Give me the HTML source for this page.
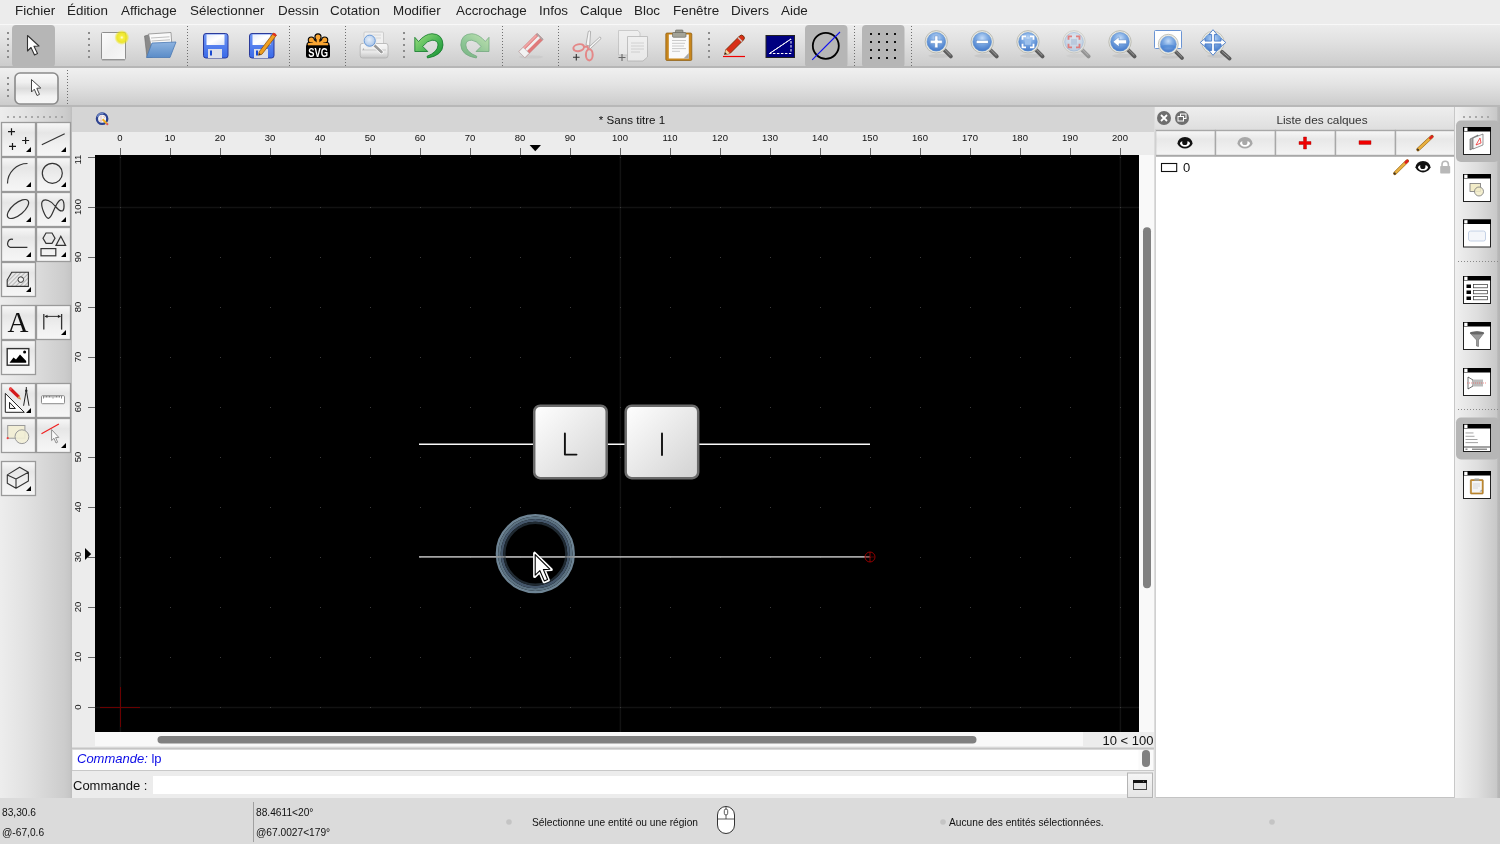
<!DOCTYPE html>
<html><head><meta charset="utf-8">
<style>
*{box-sizing:border-box;margin:0;padding:0}
html,body{width:1500px;height:844px;overflow:hidden;background:#ececec;font-family:"Liberation Sans",sans-serif;color:#1e1e1e}
.a{position:absolute;will-change:transform}
#menubar{left:0;top:0;width:1500px;height:24px;background:#ececec}
#menubar span{position:absolute;top:3px;font-size:13.4px;color:#222;white-space:nowrap}
#tb1{left:0;top:24px;width:1500px;height:44px;background:linear-gradient(#ececec,#e2e2e2 35%,#cccccc 96%,#b6b6b6 96%);border-top:1px solid #f8f8f8}
#tb2{left:0;top:68px;width:1500px;height:39px;background:linear-gradient(#f0f0f0,#e4e4e4 40%,#cccccc 95%,#b8b8b8 95%)}
.dots{position:absolute;width:2px;background-image:radial-gradient(circle,#8a8a8a 0.9px,transparent 1px);background-size:2px 6px}
.vdots{position:absolute;width:1px;background-image:linear-gradient(#777 50%,transparent 50%);background-size:1px 3px}
#leftdock{left:0;top:107px;width:72px;height:691px;background:linear-gradient(90deg,#ededed,#e2e2e2 35%,#cccccc 90%,#c6c6c6 97%,#bdbdbd)}
#doc{left:72px;top:107px;width:1083px;height:691px;background:#ececec}
#doctitle{left:0;top:0;width:1082px;height:25px;background:#d6d6d6}
#canvas{left:95px;top:155px;width:1044px;height:577px;background:#000;overflow:hidden}
#status{left:0;top:798px;width:1500px;height:46px;background:#dcdcdc}
#layers{left:1155px;top:107px;width:300px;height:691px;background:#fff}
#rightdock{left:1455px;top:107px;width:45px;height:691px;background:linear-gradient(90deg,#cfcfcf,#ececec 20%,#e0e0e0 60%,#c6c6c6 95%,#a8a8a8)}
.tbtn{position:absolute;border:1px solid #9e9e9e;background:linear-gradient(#f8f8f8,#ececec 50%,#e2e2e2)}
.tri{position:absolute;width:0;height:0;border-left:7px solid transparent;border-bottom:7px solid #000}
</style></head><body>
<!-- MENU BAR -->
<div id="menubar" class="a">
<span style="left:15px">Fichier</span>
<span style="left:67px">Édition</span>
<span style="left:121px">Affichage</span>
<span style="left:190px">Sélectionner</span>
<span style="left:278px">Dessin</span>
<span style="left:330px">Cotation</span>
<span style="left:393px">Modifier</span>
<span style="left:456px">Accrochage</span>
<span style="left:539px">Infos</span>
<span style="left:580px">Calque</span>
<span style="left:634px">Bloc</span>
<span style="left:673px">Fenêtre</span>
<span style="left:731px">Divers</span>
<span style="left:781px">Aide</span>
</div>
<!-- TOOLBAR 1 -->
<div id="tb1" class="a"><svg width="1500" height="44" viewBox="0 24 1500 44" style="position:absolute;left:0;top:-1px">
<defs>
<linearGradient id="gpage" x1="0" y1="0" x2="1" y2="1"><stop offset="0" stop-color="#fcfcfc"/><stop offset="0.5" stop-color="#f0f0f0"/><stop offset="1" stop-color="#f8f8f8"/></linearGradient>
<radialGradient id="gglow"><stop offset="0" stop-color="#ffffe8"/><stop offset="0.25" stop-color="#f6ee40"/><stop offset="0.65" stop-color="#ece418" stop-opacity="0.9"/><stop offset="1" stop-color="#ece400" stop-opacity="0"/></radialGradient>
<linearGradient id="gfold" x1="0" y1="0" x2="0" y2="1"><stop offset="0" stop-color="#8fb4e0"/><stop offset="1" stop-color="#5a8cc8"/></linearGradient>
<linearGradient id="gflop" x1="0" y1="0" x2="0" y2="1"><stop offset="0" stop-color="#7096f4"/><stop offset="1" stop-color="#3a6ae8"/></linearGradient><linearGradient id="gflab" x1="0" y1="0" x2="1" y2="1"><stop offset="0" stop-color="#e6ecfa"/><stop offset="0.5" stop-color="#ffffff"/><stop offset="1" stop-color="#dce4f6"/></linearGradient>
<radialGradient id="glens" cx="0.5" cy="0.3" r="0.65"><stop offset="0" stop-color="#c4dcf8"/><stop offset="0.45" stop-color="#80ace4"/><stop offset="1" stop-color="#4a7ecc"/></radialGradient>
<radialGradient id="glensf" cx="0.5" cy="0.35" r="0.6"><stop offset="0" stop-color="#dce8f6"/><stop offset="1" stop-color="#a8c4e6"/></radialGradient>
<linearGradient id="gprn" x1="0" y1="0" x2="0" y2="1"><stop offset="0" stop-color="#f8f8f8"/><stop offset="0.6" stop-color="#e8e8e8"/><stop offset="1" stop-color="#c4c4c4"/></linearGradient><radialGradient id="glensp" cx="0.45" cy="0.4" r="0.6"><stop offset="0" stop-color="#e8f0fa"/><stop offset="1" stop-color="#a8c4e8"/></radialGradient><linearGradient id="gundo" x1="0" y1="0" x2="1" y2="1"><stop offset="0" stop-color="#a0e080"/><stop offset="0.6" stop-color="#40b050"/><stop offset="1" stop-color="#189030"/></linearGradient><linearGradient id="gredo" x1="1" y1="0" x2="0" y2="1"><stop offset="0" stop-color="#a0e080"/><stop offset="0.6" stop-color="#40b050"/><stop offset="1" stop-color="#189030"/></linearGradient>
</defs>
<g fill="#8c8c8c">
<rect x="7" y="32" width="2" height="2"/><rect x="7" y="38" width="2" height="2"/><rect x="7" y="44" width="2" height="2"/><rect x="7" y="50" width="2" height="2"/><rect x="7" y="56" width="2" height="2"/>
<rect x="88" y="32" width="2" height="2"/><rect x="88" y="38" width="2" height="2"/><rect x="88" y="44" width="2" height="2"/><rect x="88" y="50" width="2" height="2"/><rect x="88" y="56" width="2" height="2"/>
<rect x="403" y="32" width="2" height="2"/><rect x="403" y="38" width="2" height="2"/><rect x="403" y="44" width="2" height="2"/><rect x="403" y="50" width="2" height="2"/><rect x="403" y="56" width="2" height="2"/>
<rect x="708" y="32" width="2" height="2"/><rect x="708" y="38" width="2" height="2"/><rect x="708" y="44" width="2" height="2"/><rect x="708" y="50" width="2" height="2"/><rect x="708" y="56" width="2" height="2"/>
</g>
<g stroke="#6e6e6e" stroke-width="1" stroke-dasharray="1 2">
<line x1="187.5" y1="26" x2="187.5" y2="67"/><line x1="289.5" y1="26" x2="289.5" y2="67"/><line x1="345.5" y1="26" x2="345.5" y2="67"/>
<line x1="502.5" y1="26" x2="502.5" y2="67"/><line x1="558.5" y1="26" x2="558.5" y2="67"/><line x1="854.5" y1="26" x2="854.5" y2="67"/><line x1="911.5" y1="26" x2="911.5" y2="67"/>
</g>
<!-- selected pointer -->
<rect x="12" y="25" width="43" height="42" rx="4" fill="#b6b6b6"/>
<path d="M27.5 35.5 L27.5 51 L31 47.5 L34.5 55 L37.5 53.6 L34 46.3 L39 46 Z" fill="#fff" stroke="#333" stroke-width="1.1" stroke-linejoin="round"/>
<!-- new -->
<rect x="101.5" y="32.5" width="24" height="27" rx="1" fill="url(#gpage)" stroke="#8e8e8e"/><line x1="102" y1="60" x2="125" y2="60" stroke="#9a9a9a" stroke-width="1"/>
<circle cx="121.8" cy="37.5" r="7.5" fill="url(#gglow)"/>
<!-- open -->
<path d="M144.5 36 L150 34.5 L152.5 57 L147 57.5 Z" fill="#8a8a8a" stroke="#6a6a6a" stroke-width="0.6"/>
<path d="M148.5 34 L171 32.5 L172 48 L152 50 Z" fill="#fafafa" stroke="#8c8c8c" stroke-width="0.8"/>
<path d="M151 38 L169.5 36.8 M151.5 41 L170 39.8" stroke="#b0b0b0" stroke-width="0.8"/>
<path d="M152 43 L176 42 L170 57.5 L146.5 57.5 Z" fill="url(#gfold)" stroke="#4a78b4" stroke-width="0.8"/>
<!-- save --><rect x="203.5" y="33.5" width="24.5" height="24.5" rx="2.5" fill="url(#gflop)" stroke="#2a3a9a"/>
<rect x="206.5" y="34.5" width="18" height="10.5" fill="url(#gflab)"/>
<rect x="208" y="49" width="14" height="9" fill="#dcdfe8"/>
<rect x="210" y="50.5" width="2" height="5" fill="#1a4ad0"/><rect x="249.5" y="33.5" width="24.5" height="24.5" rx="2.5" fill="url(#gflop)" stroke="#2a3a9a"/>
<rect x="252.5" y="34.5" width="18" height="10.5" fill="url(#gflab)"/>
<rect x="254" y="49" width="14" height="9" fill="#dcdfe8"/>
<rect x="256" y="50.5" width="2" height="5" fill="#1a4ad0"/>
<path d="M259 52 L273.5 33 L276.5 35.2 L262 54.2 L258.6 55.3 Z" fill="#f0a020" stroke="#8a4a00" stroke-width="0.7"/>
<path d="M272 34.6 L273.5 33 Q275.5 32.5 276.5 35.2 L275.3 36.6 Z" fill="#e03020"/>
<path d="M258.6 55.3 L259.3 53 L260.8 54.4 Z" fill="#333"/>
<!-- svg logo -->
<g stroke="#000" stroke-width="5" stroke-linecap="round"><line x1="318" y1="45" x2="318" y2="37"/><line x1="318" y1="45" x2="311.6" y2="40.2"/><line x1="318" y1="45" x2="324.4" y2="40.2"/><line x1="309" y1="44.5" x2="327" y2="44.5"/></g><circle cx="318" cy="36.9" r="3.6" fill="#000"/><circle cx="311.3" cy="40" r="3.6" fill="#000"/><circle cx="324.7" cy="40" r="3.6" fill="#000"/>
<g stroke="#f9a532" stroke-width="2.8" stroke-linecap="round"><line x1="318" y1="45" x2="318" y2="37"/><line x1="318" y1="45" x2="311.6" y2="40.2"/><line x1="318" y1="45" x2="324.4" y2="40.2"/><line x1="309" y1="44.5" x2="327" y2="44.5"/></g>
<circle cx="318" cy="36.9" r="2.5" fill="#f9a532"/><circle cx="311.3" cy="40" r="2.5" fill="#f9a532"/><circle cx="324.7" cy="40" r="2.5" fill="#f9a532"/>
<path d="M306 46 Q306 44.5 308 44.5 L328 44.5 Q330 44.5 330 46 L330 55.5 Q330 58 327.5 58 L308.5 58 Q306 58 306 55.5 Z" fill="#000"/>
<rect x="308" y="44" width="20" height="1.3" fill="#f9a532"/>
<text x="318.2" y="56.8" font-family="Liberation Sans" font-weight="bold" font-size="13" fill="#fff" text-anchor="middle" transform="translate(318.2 0) scale(0.72 1) translate(-318.2 0)">SVG</text>
<!-- print preview -->
<rect x="364" y="32" width="19.5" height="14" rx="1" fill="#f0f0f0" stroke="#c4c4c4" stroke-width="0.8"/>
<path d="M370 35 h11 M372 38 h9" stroke="#d0d0d0" stroke-width="0.8"/>
<path d="M362 43.5 L386 43.5 Q388 43.5 388 46 L388 55.5 Q388 58 385.5 58 L362.5 58 Q360.2 58 360.2 55.5 L360.2 46 Q360.2 43.5 362 43.5 Z" fill="url(#gprn)" stroke="#b0b0b0" stroke-width="0.8"/>
<rect x="362" y="49.5" width="24" height="1" fill="#c8c8c8"/>
<circle cx="363.5" cy="49" r="0.6" fill="#888"/>
<line x1="374" y1="45" x2="381.5" y2="52" stroke="#fff" stroke-width="4.2" stroke-linecap="round"/>
<line x1="374" y1="45" x2="381.5" y2="52" stroke="#9a9a9a" stroke-width="2.6" stroke-linecap="round"/>
<circle cx="369.7" cy="40.7" r="6.6" fill="#fff" stroke="#e0e0e0" stroke-width="0.6"/>
<circle cx="369.7" cy="40.7" r="5.6" fill="url(#glensp)" stroke="#5b8fd0" stroke-width="0.9"/>
<!-- undo -->
<path d="M414.8 37.3 L418.5 41.5 Q425 34 432 33.7 Q442.8 34 443 45 Q442.5 55.5 427.5 58 L427 56.3 Q437.8 52 438 45 Q438 40.2 432 40.2 Q427.5 40.5 422.7 46.4 L427.8 51.5 L414.8 51.5 Z" fill="url(#gundo)" stroke="#107828" stroke-width="0.8" stroke-linejoin="round"/>
<g opacity="0.5"><path d="M 489.0 37.3 L 485.3 41.5 Q 478.8 34.0 471.8 33.7 Q 461.0 34.0 460.8 45.0 Q 461.3 55.5 476.3 58.0 L 476.8 56.3 Q 466.0 52.0 465.8 45.0 Q 465.8 40.2 471.8 40.2 Q 476.3 40.5 481.1 46.4 L 476.0 51.5 L 489.0 51.5 Z" fill="url(#gredo)" stroke="#107828" stroke-width="0.8" stroke-linejoin="round"/></g>
<!-- eraser faded -->
<ellipse cx="531" cy="57" rx="12" ry="1.6" fill="#c8c8c8" opacity="0.8"/>
<g transform="rotate(-45 531 45.5)">
<rect x="518" y="41.2" width="26" height="8.6" rx="0.8" fill="#e07a7a" stroke="#c86a6a" stroke-width="0.5"/>
<rect x="522.5" y="44" width="21" height="2.6" fill="#f0f0f0"/>
<rect x="518" y="41.2" width="6.2" height="8.6" fill="#f2f2f2" stroke="#b0b0b0" stroke-width="0.6"/>
<rect x="542.6" y="41.2" width="1.6" height="8.6" fill="#a8a8a8"/>
<rect x="524" y="41.4" width="18" height="1.6" fill="#f0a8a8"/>
</g>
<!-- scissors faded -->
<path d="M586 45 L588.3 31.5 Q589.5 30.5 590.6 31.5 L589.6 46 Z" fill="#f6f6f6" stroke="#8a8a8a" stroke-width="0.6"/>
<path d="M589 47 L599.8 37 Q601 37.2 601 38.6 L590.4 48.6 Z" fill="#f6f6f6" stroke="#8a8a8a" stroke-width="0.6"/>
<ellipse cx="578.7" cy="47.7" rx="5.4" ry="3.4" fill="none" stroke="#e48888" stroke-width="2" transform="rotate(-12 578.7 47.7)"/>
<ellipse cx="589.3" cy="54.8" rx="3.4" ry="5.6" fill="none" stroke="#e48888" stroke-width="2"/>
<path d="M583.5 46.8 L587.5 46.5 L588.5 49.5" fill="none" stroke="#e48888" stroke-width="2"/>
<path d="M576.3 54 v6.6 M573 57.3 h6.6" stroke="#333" stroke-width="1.1"/>
<!-- copy faded -->
<g opacity="0.6"><path d="M618.5 30.5 L638 30.5 L640 33 L640 55 L618.5 55 Z" fill="#f4f4f4" stroke="#aaa" stroke-width="0.8"/>
<path d="M627.5 36.5 L647.5 36.5 L647.5 57 L643 61 L627.5 61 Z" fill="#f8f8f8" stroke="#999" stroke-width="0.8"/>
<g stroke="#bbb" stroke-width="0.8"><line x1="631" y1="43" x2="644" y2="43"/><line x1="631" y1="46" x2="644" y2="46"/><line x1="631" y1="49" x2="644" y2="49"/><line x1="631" y1="52" x2="640" y2="52"/></g>
<path d="M622 54 v7 M618.5 57.5 h7" stroke="#222" stroke-width="1.1"/></g>
<!-- paste -->
<rect x="665.8" y="33" width="26" height="27.5" rx="1.2" fill="#c8861c" stroke="#8a5a10" stroke-width="0.7"/>
<rect x="668.8" y="34.5" width="20" height="24" fill="#fafafa"/>
<path d="M683.5 58.5 L688.8 53 L688.8 58.5 Z" fill="#a8a8a8"/>
<rect x="675.5" y="30" width="7.5" height="4" rx="0.8" fill="#9c9c90" stroke="#606058" stroke-width="0.6"/>
<rect x="672.5" y="32.5" width="13.5" height="4.8" rx="1" fill="#a4a498" stroke="#606058" stroke-width="0.6"/>
<g stroke="#c4c4c4" stroke-width="0.9"><line x1="672" y1="40.5" x2="686" y2="40.5"/><line x1="672" y1="43.3" x2="685" y2="43.3"/><line x1="672" y1="46" x2="684" y2="46"/><line x1="672" y1="48.6" x2="686" y2="48.6"/><line x1="672" y1="51.3" x2="680" y2="51.3"/></g>
<!-- pencil -->
<line x1="723" y1="56.5" x2="745" y2="56.5" stroke="#f00000" stroke-width="1.2"/>
<path d="M724.5 54.5 L726 49.5 L739.5 36 Q741.5 34 743.5 36 Q745.5 38 743.5 40 L730 53.5 Z" fill="#d83018" stroke="#6a2a00" stroke-width="0.8"/>
<path d="M724.5 54.5 L726 49.5 L730 53.5 Z" fill="#f4d8a0"/>
<path d="M724.5 54.5 L725.2 52.2 L726.8 53.8 Z" fill="#222"/>
<path d="M738 37.5 L742 41.5" stroke="#ccc" stroke-width="1.5"/>
<!-- blue rect -->
<rect x="766" y="35.5" width="28.5" height="22" fill="#000080" stroke="#222" stroke-width="1"/>
<path d="M769.5 53.5 L791 39 L791 53.5 Z" fill="none" stroke="#fff" stroke-width="1" stroke-dasharray="2.5 1.5"/>
<line x1="769.5" y1="53.5" x2="791" y2="39" stroke="#fff" stroke-width="1"/>
<!-- selected circle -->
<rect x="805" y="25" width="42.5" height="42.5" rx="4" fill="#b6b6b6"/>
<circle cx="825.8" cy="45.8" r="13" fill="none" stroke="#000" stroke-width="1.8"/>
<line x1="812.2" y1="59.8" x2="840" y2="32" stroke="#1010f0" stroke-width="1.1"/>
<!-- grid -->
<rect x="862" y="25" width="42.5" height="42.5" rx="4" fill="#b6b6b6"/>
<g fill="#111">
<rect x="870" y="33" width="2" height="2"/><rect x="878" y="33" width="2" height="2"/><rect x="886" y="33" width="2" height="2"/><rect x="894" y="33" width="2" height="2"/>
<rect x="870" y="41" width="2" height="2"/><rect x="878" y="41" width="2" height="2"/><rect x="886" y="41" width="2" height="2"/><rect x="894" y="41" width="2" height="2"/>
<rect x="870" y="49" width="2" height="2"/><rect x="878" y="49" width="2" height="2"/><rect x="886" y="49" width="2" height="2"/><rect x="894" y="49" width="2" height="2"/>
<rect x="870" y="57" width="2" height="2"/><rect x="878" y="57" width="2" height="2"/><rect x="886" y="57" width="2" height="2"/><rect x="894" y="57" width="2" height="2"/>
</g>
<g><ellipse cx="939.3" cy="55.8" rx="11" ry="2" fill="#000" opacity="0.06"/><line x1="943.8" y1="49.3" x2="950.8" y2="56.3" stroke="#5c5c5c" stroke-width="4" stroke-linecap="round"/><line x1="944.3" y1="49.1" x2="950.3" y2="55.1" stroke="#8a8a8a" stroke-width="1.2" stroke-linecap="round"/><circle cx="936.3" cy="41.8" r="11.2" fill="#e8e8e0" stroke="#b8b8b0" stroke-width="0.9"/><circle cx="936.3" cy="41.8" r="9.3" fill="url(#glens)" stroke="#5b8fd0" stroke-width="0.6"/><path d="M934.6999999999999 35.8 h3.2 v4.4 h4.4 v3.2 h-4.4 v4.4 h-3.2 v-4.4 h-4.4 v-3.2 h4.4 Z" fill="#fff" stroke="#4a7cc0" stroke-width="0.5"/></g><g><ellipse cx="985.2" cy="55.8" rx="11" ry="2" fill="#000" opacity="0.06"/><line x1="989.7" y1="49.3" x2="996.7" y2="56.3" stroke="#5c5c5c" stroke-width="4" stroke-linecap="round"/><line x1="990.2" y1="49.1" x2="996.2" y2="55.1" stroke="#8a8a8a" stroke-width="1.2" stroke-linecap="round"/><circle cx="982.2" cy="41.8" r="11.2" fill="#e8e8e0" stroke="#b8b8b0" stroke-width="0.9"/><circle cx="982.2" cy="41.8" r="9.3" fill="url(#glens)" stroke="#5b8fd0" stroke-width="0.6"/><rect x="976.2" y="40.199999999999996" width="12" height="3.2" fill="#fff" stroke="#4a7cc0" stroke-width="0.5"/></g><g><ellipse cx="1031" cy="55.8" rx="11" ry="2" fill="#000" opacity="0.06"/><line x1="1035.5" y1="49.3" x2="1042.5" y2="56.3" stroke="#5c5c5c" stroke-width="4" stroke-linecap="round"/><line x1="1036.0" y1="49.1" x2="1042.0" y2="55.1" stroke="#8a8a8a" stroke-width="1.2" stroke-linecap="round"/><circle cx="1028" cy="41.8" r="11.2" fill="#e8e8e0" stroke="#b8b8b0" stroke-width="0.9"/><circle cx="1028" cy="41.8" r="9.3" fill="url(#glens)" stroke="#5b8fd0" stroke-width="0.6"/><path d="M1022.5 39.8 v-3.5 h3.5 M1030 36.3 h3.5 v3.5 M1033.5 43.8 v3.5 h-3.5 M1026 47.3 h-3.5 v-3.5" fill="none" stroke="#fff" stroke-width="1.8"/><rect x="1025" y="38.8" width="6" height="6" fill="#9cc0ec"/></g><g opacity="0.55"><ellipse cx="1077" cy="55.8" rx="11" ry="2" fill="#000" opacity="0.06"/><line x1="1081.5" y1="49.3" x2="1088.5" y2="56.3" stroke="#5c5c5c" stroke-width="4" stroke-linecap="round"/><line x1="1082.0" y1="49.1" x2="1088.0" y2="55.1" stroke="#8a8a8a" stroke-width="1.2" stroke-linecap="round"/><circle cx="1074" cy="41.8" r="11.2" fill="#e8e8e0" stroke="#b8b8b0" stroke-width="0.9"/><circle cx="1074" cy="41.8" r="9.3" fill="url(#glensf)" stroke="#5b8fd0" stroke-width="0.6"/><path d="M1068.5 39.8 v-3.5 h3.5 M1076 36.3 h3.5 v3.5 M1079.5 43.8 v3.5 h-3.5 M1072 47.3 h-3.5 v-3.5" fill="none" stroke="#e03030" stroke-width="1.8"/><rect x="1071" y="38.8" width="6" height="6" fill="#9cb8dc"/></g><g><ellipse cx="1123" cy="55.8" rx="11" ry="2" fill="#000" opacity="0.06"/><line x1="1127.5" y1="49.3" x2="1134.5" y2="56.3" stroke="#5c5c5c" stroke-width="4" stroke-linecap="round"/><line x1="1128.0" y1="49.1" x2="1134.0" y2="55.1" stroke="#8a8a8a" stroke-width="1.2" stroke-linecap="round"/><circle cx="1120" cy="41.8" r="11.2" fill="#e8e8e0" stroke="#b8b8b0" stroke-width="0.9"/><circle cx="1120" cy="41.8" r="9.3" fill="url(#glens)" stroke="#5b8fd0" stroke-width="0.6"/><path d="M1113 41.8 L1119 36.8 L1119 39.8 L1126.5 39.8 L1126.5 43.8 L1119 43.8 L1119 46.8 Z" fill="#fff" stroke="#4a7cc0" stroke-width="0.5"/></g><rect x="1154.5" y="30.5" width="27" height="18" rx="1" fill="#fff" stroke="#6a94d4" stroke-width="1"/>
<g><ellipse cx="1170" cy="57" rx="9" ry="1.6" fill="#000" opacity="0.06"/>
<line x1="1176" y1="52" x2="1182" y2="58" stroke="#5a5a5a" stroke-width="3.8" stroke-linecap="round"/><line x1="1176.4" y1="51.8" x2="1181.6" y2="57" stroke="#9a9a9a" stroke-width="1" stroke-linecap="round"/>
<circle cx="1168.3" cy="44.3" r="10" fill="#ecece4" stroke="#bcbcb4" stroke-width="0.9"/>
<circle cx="1168.3" cy="44.3" r="8" fill="url(#glens)" stroke="#6a9ad8" stroke-width="0.5"/>
<path d="M1160.6 46 Q1168.3 43.5 1176 46 L1176 48.5 Q1168.3 46.5 1160.8 48.5 Z" fill="#4a86d4" opacity="0.6"/></g>
<g><ellipse cx="1217" cy="56" rx="10" ry="1.8" fill="#000" opacity="0.06"/>
<line x1="1221.8" y1="51.8" x2="1229.6" y2="58.6" stroke="#5a5a5a" stroke-width="3.8" stroke-linecap="round"/><line x1="1222.2" y1="51.6" x2="1229" y2="57.6" stroke="#9a9a9a" stroke-width="1" stroke-linecap="round"/>
<circle cx="1213" cy="42.5" r="11.2" fill="#ecece4" stroke="#bcbcb4" stroke-width="0.9"/>
<circle cx="1213" cy="42.5" r="9.3" fill="url(#glens)" stroke="#5b8fd0" stroke-width="0.6"/>
<path d="M1211.60 41.10 L1211.60 34.50 L1209.00 34.50 L1213.00 29.70 L1217.00 34.50 L1214.40 34.50 L1214.40 41.10 L1221.00 41.10 L1221.00 38.50 L1225.80 42.50 L1221.00 46.50 L1221.00 43.90 L1214.40 43.90 L1214.40 50.50 L1217.00 50.50 L1213.00 55.30 L1209.00 50.50 L1211.60 50.50 L1211.60 43.90 L1205.00 43.90 L1205.00 46.50 L1200.20 42.50 L1205.00 38.50 L1205.00 41.10 Z" fill="#fff" stroke="#4a7cc8" stroke-width="0.9" stroke-linejoin="miter"/></g>
</svg></div>
<!-- TOOLBAR 2 -->
<div id="tb2" class="a"><svg width="100" height="39" viewBox="0 68 100 39" style="position:absolute;left:0;top:0">
<defs><linearGradient id="gbtn2" x1="0" y1="0" x2="0" y2="1"><stop offset="0" stop-color="#fafafa"/><stop offset="0.3" stop-color="#f0f0f0"/><stop offset="0.5" stop-color="#dcdcdc"/><stop offset="0.75" stop-color="#f2f2f2"/><stop offset="1" stop-color="#f6f6f6"/></linearGradient></defs>
<g fill="#8c8c8c"><rect x="7" y="77" width="2" height="2"/><rect x="7" y="83" width="2" height="2"/><rect x="7" y="89" width="2" height="2"/><rect x="7" y="95" width="2" height="2"/></g>
<rect x="15" y="73" width="43" height="31" rx="5" fill="url(#gbtn2)" stroke="#8a8a8a" stroke-width="1.6"/>
<path d="M31.5 79.5 L31.5 92 L34.3 89.2 L37 95.5 L39.5 94.4 L36.8 88.3 L40.8 88 Z" fill="#fff" stroke="#444" stroke-width="1" stroke-linejoin="round"/>
<line x1="67.5" y1="70" x2="67.5" y2="106" stroke="#6e6e6e" stroke-width="1" stroke-dasharray="1 2"/>
</svg></div>
<!-- LEFT DOCK -->
<div id="leftdock" class="a"><svg width="72" height="691" viewBox="0 107 72 691" style="position:absolute;left:0;top:0"><defs><linearGradient id="gbtn" x1="0" y1="0" x2="0" y2="1"><stop offset="0" stop-color="#f8f8f8"/><stop offset="0.3" stop-color="#e6e6e6"/><stop offset="0.65" stop-color="#f0f0f0"/><stop offset="1" stop-color="#f6f6f6"/></linearGradient></defs><g fill="#a8a8a8"><rect x="7" y="116" width="2" height="2"/><rect x="13" y="116" width="2" height="2"/><rect x="19" y="116" width="2" height="2"/><rect x="25" y="116" width="2" height="2"/><rect x="31" y="116" width="2" height="2"/><rect x="37" y="116" width="2" height="2"/><rect x="43" y="116" width="2" height="2"/><rect x="49" y="116" width="2" height="2"/><rect x="55" y="116" width="2" height="2"/><rect x="61" y="116" width="2" height="2"/></g><rect x="1.5" y="122.5" width="34" height="34" fill="url(#gbtn)" stroke="#9a9a9a" stroke-width="1.3"/><path d="M31 147 L31 152 L26 152 Z" fill="#000"/><rect x="36.5" y="122.5" width="34" height="34" fill="url(#gbtn)" stroke="#9a9a9a" stroke-width="1.3"/><path d="M66 147 L66 152 L61 152 Z" fill="#000"/><rect x="1.5" y="157.5" width="34" height="34" fill="url(#gbtn)" stroke="#9a9a9a" stroke-width="1.3"/><path d="M31 182 L31 187 L26 187 Z" fill="#000"/><rect x="36.5" y="157.5" width="34" height="34" fill="url(#gbtn)" stroke="#9a9a9a" stroke-width="1.3"/><path d="M66 182 L66 187 L61 187 Z" fill="#000"/><rect x="1.5" y="192.5" width="34" height="34" fill="url(#gbtn)" stroke="#9a9a9a" stroke-width="1.3"/><path d="M31 217 L31 222 L26 222 Z" fill="#000"/><rect x="36.5" y="192.5" width="34" height="34" fill="url(#gbtn)" stroke="#9a9a9a" stroke-width="1.3"/><path d="M66 217 L66 222 L61 222 Z" fill="#000"/><rect x="1.5" y="227.5" width="34" height="34" fill="url(#gbtn)" stroke="#9a9a9a" stroke-width="1.3"/><path d="M31 252 L31 257 L26 257 Z" fill="#000"/><rect x="36.5" y="227.5" width="34" height="34" fill="url(#gbtn)" stroke="#9a9a9a" stroke-width="1.3"/><path d="M66 252 L66 257 L61 257 Z" fill="#000"/><rect x="1.5" y="262.5" width="34" height="34" fill="url(#gbtn)" stroke="#9a9a9a" stroke-width="1.3"/><path d="M31 287 L31 292 L26 292 Z" fill="#000"/><rect x="1.5" y="305.5" width="34" height="34" fill="url(#gbtn)" stroke="#9a9a9a" stroke-width="1.3"/><rect x="36.5" y="305.5" width="34" height="34" fill="url(#gbtn)" stroke="#9a9a9a" stroke-width="1.3"/><path d="M66 330 L66 335 L61 335 Z" fill="#000"/><rect x="1.5" y="340.5" width="34" height="34" fill="url(#gbtn)" stroke="#9a9a9a" stroke-width="1.3"/><rect x="1.5" y="383.5" width="34" height="34" fill="url(#gbtn)" stroke="#9a9a9a" stroke-width="1.3"/><path d="M31 408 L31 413 L26 413 Z" fill="#000"/><rect x="36.5" y="383.5" width="34" height="34" fill="url(#gbtn)" stroke="#9a9a9a" stroke-width="1.3"/><rect x="1.5" y="418.5" width="34" height="34" fill="url(#gbtn)" stroke="#9a9a9a" stroke-width="1.3"/><rect x="36.5" y="418.5" width="34" height="34" fill="url(#gbtn)" stroke="#9a9a9a" stroke-width="1.3"/><path d="M66 443 L66 448 L61 448 Z" fill="#000"/><rect x="1.5" y="461.5" width="34" height="34" fill="url(#gbtn)" stroke="#9a9a9a" stroke-width="1.3"/><path d="M31 486 L31 491 L26 491 Z" fill="#000"/><g fill="none" stroke="#1a1a1a" stroke-width="1.2">
<path d="M8 131.7 h7 M11.5 128.2 v7 M22.1 140.5 h7 M25.6 137 v7 M9 146.4 h7 M12.5 142.9 v7"/>
<line x1="41.8" y1="144.7" x2="64.7" y2="133.8" stroke="#333"/>
<path d="M7.5 183.4 A20 20 0 0 1 27.5 163.5" stroke="#333"/>
<circle cx="52.3" cy="173.3" r="10" stroke="#333"/>
<ellipse cx="18" cy="209" rx="13" ry="5.8" transform="rotate(-40 18 209)" stroke="#333"/>
<path d="M55.5 206.5 C52 201 44 197.5 42 202 C40.5 206 45.5 218.5 48.5 218.3 C51.5 218 53 211 55.5 206.5 C58 201.5 60 199 62 199.8 C64.5 201 64.5 209 63 210.5 C61 212 58 209.5 55.5 206.5 Z" stroke="#333"/>
<path d="M13 239.3 A4.3 4.3 0 0 0 10 247.3 h17.4" stroke="#333"/>
<path d="M43 238.2 L46 233 L52 233 L55 238.2 L52 243.4 L46 243.4 Z" stroke="#333"/>
<path d="M56 245.4 L60.8 236.3 L65.6 245.4 Z" stroke="#333"/>
<rect x="41" y="248.6" width="14.8" height="7.2" stroke="#333"/>
</g>
<defs><pattern id="hatch" width="3" height="3" patternUnits="userSpaceOnUse" patternTransform="rotate(45)"><rect width="3" height="3" fill="#e8e8e8"/><line x1="0" y1="0" x2="0" y2="3" stroke="#888" stroke-width="1"/></pattern></defs>
<path d="M7.2 280 L11.7 272.3 L28.4 272.3 L28.4 286.4 L7.2 286.4 Z" fill="url(#hatch)" stroke="#333" stroke-width="1.1"/>
<circle cx="20.8" cy="279.6" r="2.8" fill="#f0f0f0" stroke="#333" stroke-width="1"/>
<text x="18" y="332" font-family="Liberation Serif" font-size="29" fill="#111" text-anchor="middle">A</text>
<g stroke="#333" stroke-width="1.3" fill="none"><line x1="43.8" y1="314" x2="43.8" y2="329.6"/><line x1="61.6" y1="314" x2="61.6" y2="329.6"/><line x1="45" y1="316.4" x2="60.4" y2="316.4" stroke-width="1"/></g>
<path d="M44.5 316.4 L47.5 314.8 L47.5 318 Z M60.9 316.4 L57.9 314.8 L57.9 318 Z" fill="#222"/>
<rect x="7.2" y="348.6" width="21.6" height="16.6" fill="#fff" stroke="#333" stroke-width="1.4"/>
<path d="M9.5 362.8 L13.5 357.5 L16 359.5 L20 354.5 L26.2 361 L26.2 362.8 Z" fill="#000"/>
<circle cx="24.6" cy="352.1" r="1.5" fill="#000"/>
<path d="M5.3 393.4 L5.3 412.3 L24.3 412.3 Z M9.5 402.3 L9.5 408.5 L15.4 408.5 Z" fill="#fff" fill-rule="evenodd" stroke="#222" stroke-width="1"/>
<path d="M10.5 389 L18.4 396.7" stroke="#d41a1a" stroke-width="3.2" stroke-linecap="round"/><path d="M17.2 398 L21 399.6 L19.6 395.6 Z" fill="#d8a060"/><circle cx="10.5" cy="389" r="1.4" fill="#f04a4a"/>
<path d="M19.6 397.9 L21 399.6 L19 399" fill="#c08040"/>
<path d="M26.3 387 L26.3 390 M26.3 390 L23.6 405.8 M26.3 390 L29 405.8" stroke="#222" stroke-width="1" fill="none"/>
<circle cx="26.3" cy="390.8" r="1.2" fill="#222"/>
<rect x="41.5" y="395.7" width="23" height="8" rx="1" fill="#fff" stroke="#8a8a8a" stroke-width="1"/>
<g stroke="#555" stroke-width="0.7"><path d="M43.5 396 v2.5 M45 396 v1.5 M46.5 396 v1.5 M48 396 v1.5 M49.5 396 v1.5 M51 396 v1.5 M53 396 v2.5 M55 396 v1.5 M56.5 396 v1.5 M58 396 v1.5 M59.5 396 v1.5 M61.5 396 v2.5"/></g>
<rect x="7.7" y="425.5" width="17.2" height="12.7" fill="#f2eed6" stroke="#9a9a9a" stroke-width="1"/>
<circle cx="21.9" cy="436.7" r="6.9" fill="#f2eed6" fill-opacity="0.9" stroke="#9a9a9a" stroke-width="1"/>
<circle cx="7.7" cy="438.2" r="1.1" fill="#f04040"/>
<line x1="41.5" y1="433.8" x2="58.9" y2="424" stroke="#f02020" stroke-width="1.2"/>
<path d="M51.6 429.6 L51.6 440.5 L54 438.3 L56 443 L57.6 442.2 L55.6 437.6 L58.8 437.4 Z" fill="#fafafa" stroke="#777" stroke-width="0.8" stroke-linejoin="round"/>
<g fill="none" stroke="#333" stroke-width="1.1" stroke-linejoin="round">
<path d="M7.3 474.9 L19.6 467.3 L28.4 472.3 L16 478.9 Z M7.3 474.9 L7.3 483.3 L16 488.3 L28.4 481 L28.4 472.3 M16 478.9 L16 488.3"/>
</g>
</svg></div>
<!-- DOC -->
<div id="doc" class="a"><svg width="1083" height="691" viewBox="72 107 1083 691" style="position:absolute;left:0;top:0"><defs><linearGradient id="gcb" x1="0" y1="0" x2="0" y2="1"><stop offset="0" stop-color="#f6f6f6"/><stop offset="1" stop-color="#e4e4e4"/></linearGradient>
<linearGradient id="gkey" x1="0" y1="0" x2="1" y2="1"><stop offset="0" stop-color="#ffffff"/><stop offset="1" stop-color="#d2d2d2"/></linearGradient>
<radialGradient id="gring" cx="0.5" cy="0.5" r="0.5"><stop offset="0.74" stop-color="#000" stop-opacity="0"/><stop offset="0.8" stop-color="#2a3a46"/><stop offset="0.9" stop-color="#5a7080"/><stop offset="0.95" stop-color="#6c8292"/><stop offset="1" stop-color="#4a5c68" stop-opacity="0.6"/></radialGradient>
</defs><rect x="72" y="107" width="1083" height="25" fill="#d5d5d5"/><rect x="72" y="132" width="1083" height="616" fill="#ececec"/><text x="632" y="124" font-family="Liberation Sans" font-size="11.6" fill="#111" text-anchor="middle">* Sans titre 1</text><circle cx="102.1" cy="118.7" r="5.2" fill="#f2f2f2" stroke="#2c4290" stroke-width="2.3"/><path d="M97.5 117 a5.2 5.2 0 0 1 6 -3.6" fill="none" stroke="#7088c4" stroke-width="1.6"/><path d="M99 121 h3 M101 115.5 v6 M103.5 116 l1.5 2" stroke="#d8a0a0" stroke-width="0.6"/><line x1="102.6" y1="119.2" x2="106.8" y2="123.6" stroke="#f4b020" stroke-width="2"/><circle cx="107.3" cy="124.2" r="1.1" fill="#e05858"/><rect x="95" y="155" width="1044" height="577" fill="#000"/><g stroke="#121212" stroke-width="1.5"><line x1="120.4" y1="155" x2="120.4" y2="732"/><line x1="620.4" y1="155" x2="620.4" y2="732"/><line x1="1120.4" y1="155" x2="1120.4" y2="732"/><line x1="95" y1="207.4" x2="1139" y2="207.4"/><line x1="95" y1="707.4" x2="1139" y2="707.4"/></g><g fill="#3a3a3a"><rect x="120" y="157" width="1" height="1"/><rect x="120" y="207" width="1" height="1"/><rect x="120" y="257" width="1" height="1"/><rect x="120" y="307" width="1" height="1"/><rect x="120" y="357" width="1" height="1"/><rect x="120" y="407" width="1" height="1"/><rect x="120" y="457" width="1" height="1"/><rect x="120" y="507" width="1" height="1"/><rect x="120" y="557" width="1" height="1"/><rect x="120" y="607" width="1" height="1"/><rect x="120" y="657" width="1" height="1"/><rect x="120" y="707" width="1" height="1"/><rect x="170" y="157" width="1" height="1"/><rect x="170" y="207" width="1" height="1"/><rect x="170" y="257" width="1" height="1"/><rect x="170" y="307" width="1" height="1"/><rect x="170" y="357" width="1" height="1"/><rect x="170" y="407" width="1" height="1"/><rect x="170" y="457" width="1" height="1"/><rect x="170" y="507" width="1" height="1"/><rect x="170" y="557" width="1" height="1"/><rect x="170" y="607" width="1" height="1"/><rect x="170" y="657" width="1" height="1"/><rect x="170" y="707" width="1" height="1"/><rect x="220" y="157" width="1" height="1"/><rect x="220" y="207" width="1" height="1"/><rect x="220" y="257" width="1" height="1"/><rect x="220" y="307" width="1" height="1"/><rect x="220" y="357" width="1" height="1"/><rect x="220" y="407" width="1" height="1"/><rect x="220" y="457" width="1" height="1"/><rect x="220" y="507" width="1" height="1"/><rect x="220" y="557" width="1" height="1"/><rect x="220" y="607" width="1" height="1"/><rect x="220" y="657" width="1" height="1"/><rect x="220" y="707" width="1" height="1"/><rect x="270" y="157" width="1" height="1"/><rect x="270" y="207" width="1" height="1"/><rect x="270" y="257" width="1" height="1"/><rect x="270" y="307" width="1" height="1"/><rect x="270" y="357" width="1" height="1"/><rect x="270" y="407" width="1" height="1"/><rect x="270" y="457" width="1" height="1"/><rect x="270" y="507" width="1" height="1"/><rect x="270" y="557" width="1" height="1"/><rect x="270" y="607" width="1" height="1"/><rect x="270" y="657" width="1" height="1"/><rect x="270" y="707" width="1" height="1"/><rect x="320" y="157" width="1" height="1"/><rect x="320" y="207" width="1" height="1"/><rect x="320" y="257" width="1" height="1"/><rect x="320" y="307" width="1" height="1"/><rect x="320" y="357" width="1" height="1"/><rect x="320" y="407" width="1" height="1"/><rect x="320" y="457" width="1" height="1"/><rect x="320" y="507" width="1" height="1"/><rect x="320" y="557" width="1" height="1"/><rect x="320" y="607" width="1" height="1"/><rect x="320" y="657" width="1" height="1"/><rect x="320" y="707" width="1" height="1"/><rect x="370" y="157" width="1" height="1"/><rect x="370" y="207" width="1" height="1"/><rect x="370" y="257" width="1" height="1"/><rect x="370" y="307" width="1" height="1"/><rect x="370" y="357" width="1" height="1"/><rect x="370" y="407" width="1" height="1"/><rect x="370" y="457" width="1" height="1"/><rect x="370" y="507" width="1" height="1"/><rect x="370" y="557" width="1" height="1"/><rect x="370" y="607" width="1" height="1"/><rect x="370" y="657" width="1" height="1"/><rect x="370" y="707" width="1" height="1"/><rect x="420" y="157" width="1" height="1"/><rect x="420" y="207" width="1" height="1"/><rect x="420" y="257" width="1" height="1"/><rect x="420" y="307" width="1" height="1"/><rect x="420" y="357" width="1" height="1"/><rect x="420" y="407" width="1" height="1"/><rect x="420" y="457" width="1" height="1"/><rect x="420" y="507" width="1" height="1"/><rect x="420" y="557" width="1" height="1"/><rect x="420" y="607" width="1" height="1"/><rect x="420" y="657" width="1" height="1"/><rect x="420" y="707" width="1" height="1"/><rect x="470" y="157" width="1" height="1"/><rect x="470" y="207" width="1" height="1"/><rect x="470" y="257" width="1" height="1"/><rect x="470" y="307" width="1" height="1"/><rect x="470" y="357" width="1" height="1"/><rect x="470" y="407" width="1" height="1"/><rect x="470" y="457" width="1" height="1"/><rect x="470" y="507" width="1" height="1"/><rect x="470" y="557" width="1" height="1"/><rect x="470" y="607" width="1" height="1"/><rect x="470" y="657" width="1" height="1"/><rect x="470" y="707" width="1" height="1"/><rect x="520" y="157" width="1" height="1"/><rect x="520" y="207" width="1" height="1"/><rect x="520" y="257" width="1" height="1"/><rect x="520" y="307" width="1" height="1"/><rect x="520" y="357" width="1" height="1"/><rect x="520" y="407" width="1" height="1"/><rect x="520" y="457" width="1" height="1"/><rect x="520" y="507" width="1" height="1"/><rect x="520" y="557" width="1" height="1"/><rect x="520" y="607" width="1" height="1"/><rect x="520" y="657" width="1" height="1"/><rect x="520" y="707" width="1" height="1"/><rect x="570" y="157" width="1" height="1"/><rect x="570" y="207" width="1" height="1"/><rect x="570" y="257" width="1" height="1"/><rect x="570" y="307" width="1" height="1"/><rect x="570" y="357" width="1" height="1"/><rect x="570" y="407" width="1" height="1"/><rect x="570" y="457" width="1" height="1"/><rect x="570" y="507" width="1" height="1"/><rect x="570" y="557" width="1" height="1"/><rect x="570" y="607" width="1" height="1"/><rect x="570" y="657" width="1" height="1"/><rect x="570" y="707" width="1" height="1"/><rect x="620" y="157" width="1" height="1"/><rect x="620" y="207" width="1" height="1"/><rect x="620" y="257" width="1" height="1"/><rect x="620" y="307" width="1" height="1"/><rect x="620" y="357" width="1" height="1"/><rect x="620" y="407" width="1" height="1"/><rect x="620" y="457" width="1" height="1"/><rect x="620" y="507" width="1" height="1"/><rect x="620" y="557" width="1" height="1"/><rect x="620" y="607" width="1" height="1"/><rect x="620" y="657" width="1" height="1"/><rect x="620" y="707" width="1" height="1"/><rect x="670" y="157" width="1" height="1"/><rect x="670" y="207" width="1" height="1"/><rect x="670" y="257" width="1" height="1"/><rect x="670" y="307" width="1" height="1"/><rect x="670" y="357" width="1" height="1"/><rect x="670" y="407" width="1" height="1"/><rect x="670" y="457" width="1" height="1"/><rect x="670" y="507" width="1" height="1"/><rect x="670" y="557" width="1" height="1"/><rect x="670" y="607" width="1" height="1"/><rect x="670" y="657" width="1" height="1"/><rect x="670" y="707" width="1" height="1"/><rect x="720" y="157" width="1" height="1"/><rect x="720" y="207" width="1" height="1"/><rect x="720" y="257" width="1" height="1"/><rect x="720" y="307" width="1" height="1"/><rect x="720" y="357" width="1" height="1"/><rect x="720" y="407" width="1" height="1"/><rect x="720" y="457" width="1" height="1"/><rect x="720" y="507" width="1" height="1"/><rect x="720" y="557" width="1" height="1"/><rect x="720" y="607" width="1" height="1"/><rect x="720" y="657" width="1" height="1"/><rect x="720" y="707" width="1" height="1"/><rect x="770" y="157" width="1" height="1"/><rect x="770" y="207" width="1" height="1"/><rect x="770" y="257" width="1" height="1"/><rect x="770" y="307" width="1" height="1"/><rect x="770" y="357" width="1" height="1"/><rect x="770" y="407" width="1" height="1"/><rect x="770" y="457" width="1" height="1"/><rect x="770" y="507" width="1" height="1"/><rect x="770" y="557" width="1" height="1"/><rect x="770" y="607" width="1" height="1"/><rect x="770" y="657" width="1" height="1"/><rect x="770" y="707" width="1" height="1"/><rect x="820" y="157" width="1" height="1"/><rect x="820" y="207" width="1" height="1"/><rect x="820" y="257" width="1" height="1"/><rect x="820" y="307" width="1" height="1"/><rect x="820" y="357" width="1" height="1"/><rect x="820" y="407" width="1" height="1"/><rect x="820" y="457" width="1" height="1"/><rect x="820" y="507" width="1" height="1"/><rect x="820" y="557" width="1" height="1"/><rect x="820" y="607" width="1" height="1"/><rect x="820" y="657" width="1" height="1"/><rect x="820" y="707" width="1" height="1"/><rect x="870" y="157" width="1" height="1"/><rect x="870" y="207" width="1" height="1"/><rect x="870" y="257" width="1" height="1"/><rect x="870" y="307" width="1" height="1"/><rect x="870" y="357" width="1" height="1"/><rect x="870" y="407" width="1" height="1"/><rect x="870" y="457" width="1" height="1"/><rect x="870" y="507" width="1" height="1"/><rect x="870" y="557" width="1" height="1"/><rect x="870" y="607" width="1" height="1"/><rect x="870" y="657" width="1" height="1"/><rect x="870" y="707" width="1" height="1"/><rect x="920" y="157" width="1" height="1"/><rect x="920" y="207" width="1" height="1"/><rect x="920" y="257" width="1" height="1"/><rect x="920" y="307" width="1" height="1"/><rect x="920" y="357" width="1" height="1"/><rect x="920" y="407" width="1" height="1"/><rect x="920" y="457" width="1" height="1"/><rect x="920" y="507" width="1" height="1"/><rect x="920" y="557" width="1" height="1"/><rect x="920" y="607" width="1" height="1"/><rect x="920" y="657" width="1" height="1"/><rect x="920" y="707" width="1" height="1"/><rect x="970" y="157" width="1" height="1"/><rect x="970" y="207" width="1" height="1"/><rect x="970" y="257" width="1" height="1"/><rect x="970" y="307" width="1" height="1"/><rect x="970" y="357" width="1" height="1"/><rect x="970" y="407" width="1" height="1"/><rect x="970" y="457" width="1" height="1"/><rect x="970" y="507" width="1" height="1"/><rect x="970" y="557" width="1" height="1"/><rect x="970" y="607" width="1" height="1"/><rect x="970" y="657" width="1" height="1"/><rect x="970" y="707" width="1" height="1"/><rect x="1020" y="157" width="1" height="1"/><rect x="1020" y="207" width="1" height="1"/><rect x="1020" y="257" width="1" height="1"/><rect x="1020" y="307" width="1" height="1"/><rect x="1020" y="357" width="1" height="1"/><rect x="1020" y="407" width="1" height="1"/><rect x="1020" y="457" width="1" height="1"/><rect x="1020" y="507" width="1" height="1"/><rect x="1020" y="557" width="1" height="1"/><rect x="1020" y="607" width="1" height="1"/><rect x="1020" y="657" width="1" height="1"/><rect x="1020" y="707" width="1" height="1"/><rect x="1070" y="157" width="1" height="1"/><rect x="1070" y="207" width="1" height="1"/><rect x="1070" y="257" width="1" height="1"/><rect x="1070" y="307" width="1" height="1"/><rect x="1070" y="357" width="1" height="1"/><rect x="1070" y="407" width="1" height="1"/><rect x="1070" y="457" width="1" height="1"/><rect x="1070" y="507" width="1" height="1"/><rect x="1070" y="557" width="1" height="1"/><rect x="1070" y="607" width="1" height="1"/><rect x="1070" y="657" width="1" height="1"/><rect x="1070" y="707" width="1" height="1"/><rect x="1120" y="157" width="1" height="1"/><rect x="1120" y="207" width="1" height="1"/><rect x="1120" y="257" width="1" height="1"/><rect x="1120" y="307" width="1" height="1"/><rect x="1120" y="357" width="1" height="1"/><rect x="1120" y="407" width="1" height="1"/><rect x="1120" y="457" width="1" height="1"/><rect x="1120" y="507" width="1" height="1"/><rect x="1120" y="557" width="1" height="1"/><rect x="1120" y="607" width="1" height="1"/><rect x="1120" y="657" width="1" height="1"/><rect x="1120" y="707" width="1" height="1"/></g><g stroke="#6a0000" stroke-width="1"><line x1="100" y1="707.5" x2="140" y2="707.5"/><line x1="120.5" y1="687" x2="120.5" y2="727"/></g><line x1="419" y1="444.3" x2="870" y2="444.3" stroke="#fafafa" stroke-width="1.5"/><line x1="419" y1="556.9" x2="870" y2="556.9" stroke="#a4a4a4" stroke-width="1.6"/><g stroke="#a00000" stroke-width="0.9" fill="none"><circle cx="870" cy="557" r="5"/><line x1="870" y1="552" x2="870" y2="562"/><line x1="865" y1="557" x2="875" y2="557" stroke="#600000"/></g><rect x="534.2" y="405.7" width="72.5" height="72.5" rx="6" fill="url(#gkey)" stroke="#6a6a6a" stroke-width="2.5"/><rect x="625.7" y="405.7" width="72.5" height="72.5" rx="6" fill="url(#gkey)" stroke="#6a6a6a" stroke-width="2.5"/><path d="M564.9 433.5 V454.6 H576.5" fill="none" stroke="#111" stroke-width="1.9" stroke-linecap="round" stroke-linejoin="round"/><line x1="662" y1="433.5" x2="662" y2="455" stroke="#111" stroke-width="1.9" stroke-linecap="round"/><g fill="none"><circle cx="535.3" cy="553.7" r="38.4" stroke="#6e8494" stroke-width="2.4"/><circle cx="535.3" cy="553.7" r="35.9" stroke="#5c7282" stroke-width="2.6"/><circle cx="535.3" cy="553.7" r="33.3" stroke="#44566a" stroke-width="2.6"/><circle cx="535.3" cy="553.7" r="30.9" stroke="#202a32" stroke-width="2.2"/></g>
<line x1="496" y1="556.9" x2="575" y2="556.9" stroke="#a4a4a4" stroke-width="1.6" opacity="0.6"/><path d="M534.6 553.2 L534.6 576.6 L539.8 571.6 L544 581.8 L548.4 580 L544.3 570 L551.3 569.5 Z" fill="#fff" stroke="#fff" stroke-width="3" stroke-linejoin="round"/><path d="M535.2 554.6 L535.2 575.2 L539.9 570.7 L544.3 580.9 L547.6 579.5 L543.4 569.6 L549.8 569.2 Z" fill="#fff" stroke="#000" stroke-width="1.1" stroke-linejoin="round"/><line x1="120.5" y1="148" x2="120.5" y2="155" stroke="#666"/><line x1="170.5" y1="148" x2="170.5" y2="155" stroke="#666"/><line x1="220.5" y1="148" x2="220.5" y2="155" stroke="#666"/><line x1="270.5" y1="148" x2="270.5" y2="155" stroke="#666"/><line x1="320.5" y1="148" x2="320.5" y2="155" stroke="#666"/><line x1="370.5" y1="148" x2="370.5" y2="155" stroke="#666"/><line x1="420.5" y1="148" x2="420.5" y2="155" stroke="#666"/><line x1="470.5" y1="148" x2="470.5" y2="155" stroke="#666"/><line x1="520.5" y1="148" x2="520.5" y2="155" stroke="#666"/><line x1="570.5" y1="148" x2="570.5" y2="155" stroke="#666"/><line x1="620.5" y1="148" x2="620.5" y2="155" stroke="#666"/><line x1="670.5" y1="148" x2="670.5" y2="155" stroke="#666"/><line x1="720.5" y1="148" x2="720.5" y2="155" stroke="#666"/><line x1="770.5" y1="148" x2="770.5" y2="155" stroke="#666"/><line x1="820.5" y1="148" x2="820.5" y2="155" stroke="#666"/><line x1="870.5" y1="148" x2="870.5" y2="155" stroke="#666"/><line x1="920.5" y1="148" x2="920.5" y2="155" stroke="#666"/><line x1="970.5" y1="148" x2="970.5" y2="155" stroke="#666"/><line x1="1020.5" y1="148" x2="1020.5" y2="155" stroke="#666"/><line x1="1070.5" y1="148" x2="1070.5" y2="155" stroke="#666"/><line x1="1120.5" y1="148" x2="1120.5" y2="155" stroke="#666"/><g font-family="Liberation Sans" font-size="9.5" fill="#111" text-anchor="middle"><text x="120" y="140.8">0</text><text x="170" y="140.8">10</text><text x="220" y="140.8">20</text><text x="270" y="140.8">30</text><text x="320" y="140.8">40</text><text x="370" y="140.8">50</text><text x="420" y="140.8">60</text><text x="470" y="140.8">70</text><text x="520" y="140.8">80</text><text x="570" y="140.8">90</text><text x="620" y="140.8">100</text><text x="670" y="140.8">110</text><text x="720" y="140.8">120</text><text x="770" y="140.8">130</text><text x="820" y="140.8">140</text><text x="870" y="140.8">150</text><text x="920" y="140.8">160</text><text x="970" y="140.8">170</text><text x="1020" y="140.8">180</text><text x="1070" y="140.8">190</text><text x="1120" y="140.8">200</text></g><line x1="88" y1="707.5" x2="95" y2="707.5" stroke="#666"/><line x1="88" y1="657.5" x2="95" y2="657.5" stroke="#666"/><line x1="88" y1="607.5" x2="95" y2="607.5" stroke="#666"/><line x1="88" y1="557.5" x2="95" y2="557.5" stroke="#666"/><line x1="88" y1="507.5" x2="95" y2="507.5" stroke="#666"/><line x1="88" y1="457.5" x2="95" y2="457.5" stroke="#666"/><line x1="88" y1="407.5" x2="95" y2="407.5" stroke="#666"/><line x1="88" y1="357.5" x2="95" y2="357.5" stroke="#666"/><line x1="88" y1="307.5" x2="95" y2="307.5" stroke="#666"/><line x1="88" y1="257.5" x2="95" y2="257.5" stroke="#666"/><line x1="88" y1="207.5" x2="95" y2="207.5" stroke="#666"/><line x1="88" y1="157.5" x2="95" y2="157.5" stroke="#666"/><g font-family="Liberation Sans" font-size="9.5" fill="#111" text-anchor="middle"><text transform="translate(81.2 707) rotate(-90)" x="0" y="0">0</text><text transform="translate(81.2 657) rotate(-90)" x="0" y="0">10</text><text transform="translate(81.2 607) rotate(-90)" x="0" y="0">20</text><text transform="translate(81.2 557) rotate(-90)" x="0" y="0">30</text><text transform="translate(81.2 507) rotate(-90)" x="0" y="0">40</text><text transform="translate(81.2 457) rotate(-90)" x="0" y="0">50</text><text transform="translate(81.2 407) rotate(-90)" x="0" y="0">60</text><text transform="translate(81.2 357) rotate(-90)" x="0" y="0">70</text><text transform="translate(81.2 307) rotate(-90)" x="0" y="0">80</text><text transform="translate(81.2 257) rotate(-90)" x="0" y="0">90</text><text transform="translate(81.2 207) rotate(-90)" x="0" y="0">100</text><text transform="translate(81.2 157) rotate(-90)" x="0" y="0">110</text></g><path d="M529.6 145 L541 145 L535.3 151.2 Z" fill="#000"/><path d="M85 548 L91.2 554 L85 560 Z" fill="#000"/><rect x="72" y="132" width="23" height="23" fill="#ececec"/><text x="632" y="124" font-family="Liberation Sans" font-size="11.6" fill="#111" text-anchor="middle"></text><rect x="1139" y="155" width="15" height="577" fill="#f9f9f9"/><rect x="1143" y="227.3" width="8" height="361" rx="4" fill="#808080"/><rect x="95" y="732" width="988" height="14" fill="#f8f8f8"/><rect x="157.5" y="736" width="819" height="7.5" rx="3.75" fill="#808080"/><text x="1153.5" y="745" font-family="Liberation Sans" font-size="13" fill="#111" text-anchor="end">10 &lt; 100</text><rect x="72" y="746" width="1083" height="52" fill="#ececec"/><line x1="72" y1="748.5" x2="1154" y2="748.5" stroke="#c4c4c4" stroke-width="2"/><rect x="73" y="750" width="1080" height="20" fill="#fff"/><rect x="1138.5" y="750" width="14.5" height="20" fill="#fafafa"/><rect x="1142" y="750" width="8" height="17" rx="4" fill="#808080"/><line x1="72" y1="770.5" x2="1154" y2="770.5" stroke="#c8c8c8" stroke-width="1"/><text x="77" y="762.5" font-family="Liberation Sans" font-size="13" fill="#0c0ce6"><tspan font-style="italic">Commande: </tspan>lp</text><text x="73" y="789.5" font-family="Liberation Sans" font-size="13" fill="#111">Commande :</text><rect x="153" y="776" width="974" height="18" fill="#fff"/><rect x="1127.5" y="773" width="25" height="24.5" fill="url(#gcb)" stroke="#b4b4b4" stroke-width="1"/><rect x="1133.5" y="780.5" width="13" height="9" fill="#e4e4e4" stroke="#444" stroke-width="1"/><rect x="1133" y="780" width="14" height="3" fill="#111"/><circle cx="1143.5" cy="781.5" r="0.5" fill="#888"/><line x1="1154.5" y1="107" x2="1154.5" y2="798" stroke="#dcdcdc"/><line x1="71.5" y1="107" x2="71.5" y2="798" stroke="#b0b0b0"/></svg></div>
<!-- LAYERS -->
<div id="layers" class="a"><svg width="300" height="691" viewBox="1155 107 300 691" style="position:absolute;left:0;top:0"><defs><linearGradient id="gtitle" x1="0" y1="0" x2="0" y2="1"><stop offset="0" stop-color="#eeeeee"/><stop offset="1" stop-color="#dedede"/></linearGradient>
<linearGradient id="glb" x1="0" y1="0" x2="0" y2="1"><stop offset="0" stop-color="#f8f8f8"/><stop offset="0.35" stop-color="#e8e8e8"/><stop offset="1" stop-color="#f4f4f4"/></linearGradient>
<linearGradient id="gpen" x1="0" y1="0" x2="1" y2="0"><stop offset="0" stop-color="#f0c060"/><stop offset="1" stop-color="#c08020"/></linearGradient></defs>
<rect x="1155" y="107" width="300" height="691" fill="#fff"/>
<rect x="1155" y="107" width="300" height="23" fill="url(#gtitle)"/>
<circle cx="1164" cy="118" r="7" fill="#6e6e6e"/><path d="M1161 115 L1167 121 M1167 115 L1161 121" stroke="#fff" stroke-width="1.8"/>
<circle cx="1182" cy="118" r="7" fill="#6e6e6e"/><rect x="1180.5" y="114" width="5.5" height="4.5" fill="none" stroke="#fff" stroke-width="1"/><rect x="1178" y="116.5" width="5.5" height="4.5" fill="#6e6e6e" stroke="#fff" stroke-width="1"/>
<text x="1322" y="123.5" font-family="Liberation Sans" font-size="11.8" fill="#333" text-anchor="middle">Liste des calques</text>
<rect x="1155.5" y="130.5" width="60" height="25" fill="url(#glb)" stroke="#a8a8a8" stroke-width="1.4"/><rect x="1215.5" y="130.5" width="60" height="25" fill="url(#glb)" stroke="#a8a8a8" stroke-width="1.4"/><rect x="1275.5" y="130.5" width="60" height="25" fill="url(#glb)" stroke="#a8a8a8" stroke-width="1.4"/><rect x="1335.5" y="130.5" width="60" height="25" fill="url(#glb)" stroke="#a8a8a8" stroke-width="1.4"/><rect x="1395.5" y="130.5" width="59.5" height="25" fill="url(#glb)" stroke="#a8a8a8" stroke-width="1.4"/><g transform="translate(1185 142.7)"><path d="M-7.6 1 Q-6.5 -5.6 0 -5.6 Q6.5 -5.6 7.6 1 Q5 5.8 0 5.8 Q-5 5.8 -7.6 1 Z" fill="#111"/><path d="M-5 0.6 Q-4.3 4 0 4 Q4.3 4 5 0.6 Q3.5 -2.6 0 -2.6 Q-3.5 -2.6 -5 0.6 Z" fill="#fff"/><circle cx="-0.2" cy="-0.2" r="2.6" fill="#111"/><rect x="-5" y="-3" width="10" height="1.8" fill="#111"/></g><g transform="translate(1245 142.7)"><path d="M-7.6 1 Q-6.5 -5.6 0 -5.6 Q6.5 -5.6 7.6 1 Q5 5.8 0 5.8 Q-5 5.8 -7.6 1 Z" fill="#a8a8a8"/><path d="M-5 0.6 Q-4.3 4 0 4 Q4.3 4 5 0.6 Q3.5 -2.6 0 -2.6 Q-3.5 -2.6 -5 0.6 Z" fill="#fff"/><circle cx="-0.2" cy="-0.2" r="2.6" fill="#a8a8a8"/><rect x="-5" y="-3" width="10" height="1.8" fill="#a8a8a8"/></g><path d="M1303.5 137 h3 v4.5 h4.5 v3 h-4.5 v4.5 h-3 v-4.5 h-4.5 v-3 h4.5 Z" fill="#f00000" stroke="#900" stroke-width="0.4"/><rect x="1359" y="140.8" width="12" height="3.6" fill="#f00000" stroke="#900" stroke-width="0.4"/><line x1="1418" y1="149.6" x2="1432" y2="136.6" stroke="#8a5a10" stroke-width="3.4000000000000004" stroke-linecap="round"/><line x1="1418.3" y1="149.29999999999998" x2="1432" y2="136.6" stroke="#e8b040" stroke-width="2.6" stroke-linecap="butt"/><line x1="1430.32" y1="138.16" x2="1432" y2="136.6" stroke="#e02020" stroke-width="2.6" stroke-linecap="round"/><circle cx="1418" cy="149.6" r="0.9" fill="#333"/><line x1="1155" y1="156" x2="1455" y2="156" stroke="#a8a8a8" stroke-width="1.4"/><rect x="1161.5" y="163.5" width="15.2" height="8" fill="#fff" stroke="#111" stroke-width="1.1"/><text x="1183" y="171.8" font-family="Liberation Sans" font-size="13" fill="#111">0</text><line x1="1394.8" y1="173.4" x2="1407.3" y2="161" stroke="#8a5a10" stroke-width="3.4000000000000004" stroke-linecap="round"/><line x1="1395.1" y1="173.1" x2="1407.3" y2="161" stroke="#e8b040" stroke-width="2.6" stroke-linecap="butt"/><line x1="1405.8" y1="162.488" x2="1407.3" y2="161" stroke="#e02020" stroke-width="2.6" stroke-linecap="round"/><circle cx="1394.8" cy="173.4" r="0.9" fill="#333"/><g transform="translate(1423 166.6)"><path d="M-7.6 1 Q-6.5 -5.6 0 -5.6 Q6.5 -5.6 7.6 1 Q5 5.8 0 5.8 Q-5 5.8 -7.6 1 Z" fill="#111"/><path d="M-5 0.6 Q-4.3 4 0 4 Q4.3 4 5 0.6 Q3.5 -2.6 0 -2.6 Q-3.5 -2.6 -5 0.6 Z" fill="#fff"/><circle cx="-0.2" cy="-0.2" r="2.6" fill="#111"/><rect x="-5" y="-3" width="10" height="1.8" fill="#111"/></g><path d="M1442 167 v-2.5 a3.2 3.2 0 0 1 6.4 0 v2.5" fill="none" stroke="#b8b8b8" stroke-width="1.6"/><rect x="1440.2" y="166" width="10" height="7.6" rx="0.8" fill="#b8b8b8"/><line x1="1155" y1="797.5" x2="1455" y2="797.5" stroke="#c4c4c4"/><line x1="1454.5" y1="107" x2="1454.5" y2="798" stroke="#c8c8c8"/><line x1="1155.5" y1="130" x2="1155.5" y2="798" stroke="#d0d0d0"/></svg></div>
<div id="rightdock" class="a"><svg width="45" height="691" viewBox="1455 107 45 691" style="position:absolute;left:0;top:0"><defs><linearGradient id="grd" x1="0" y1="0" x2="1" y2="0"><stop offset="0" stop-color="#f0f0f0"/><stop offset="0.5" stop-color="#dedede"/><stop offset="0.93" stop-color="#c8c8c8"/><stop offset="0.95" stop-color="#b8b8b8"/><stop offset="1" stop-color="#b4b4b4"/></linearGradient></defs>
<rect x="1455" y="107" width="45" height="691" fill="url(#grd)"/>
<g fill="#a8a8a8"><rect x="1463" y="116" width="2" height="2"/><rect x="1469" y="116" width="2" height="2"/><rect x="1475" y="116" width="2" height="2"/><rect x="1481" y="116" width="2" height="2"/><rect x="1487" y="116" width="2" height="2"/></g><g stroke="#888" stroke-width="1" stroke-dasharray="1 2"><line x1="1458" y1="261.5" x2="1500" y2="261.5"/><line x1="1458" y1="409.5" x2="1500" y2="409.5"/></g><rect x="1456" y="120.5" width="43.5" height="41.5" rx="5" fill="#b6b6b6"/><rect x="1456" y="417.5" width="43.5" height="42" rx="5" fill="#b6b6b6"/><rect x="1463.5" y="127.5" width="27" height="27" fill="#fff" stroke="#222" stroke-width="1"/><rect x="1463" y="127" width="28" height="4.5" fill="#000"/><rect x="1464.2" y="127.7" width="3.3" height="3.3" fill="#fff"/><rect x="1463.5" y="174.5" width="27" height="27" fill="#fff" stroke="#222" stroke-width="1"/><rect x="1463" y="174" width="28" height="4.5" fill="#000"/><rect x="1464.2" y="174.7" width="3.3" height="3.3" fill="#fff"/><rect x="1463.5" y="220.0" width="27" height="27" fill="#fff" stroke="#222" stroke-width="1"/><rect x="1463" y="219.5" width="28" height="4.5" fill="#000"/><rect x="1464.2" y="220.2" width="3.3" height="3.3" fill="#fff"/><rect x="1463.5" y="276.5" width="27" height="27" fill="#fff" stroke="#222" stroke-width="1"/><rect x="1463" y="276" width="28" height="4.5" fill="#000"/><rect x="1464.2" y="276.7" width="3.3" height="3.3" fill="#fff"/><rect x="1463.5" y="322.5" width="27" height="27" fill="#fff" stroke="#222" stroke-width="1"/><rect x="1463" y="322" width="28" height="4.5" fill="#000"/><rect x="1464.2" y="322.7" width="3.3" height="3.3" fill="#fff"/><rect x="1463.5" y="368.5" width="27" height="27" fill="#fff" stroke="#222" stroke-width="1"/><rect x="1463" y="368" width="28" height="4.5" fill="#000"/><rect x="1464.2" y="368.7" width="3.3" height="3.3" fill="#fff"/><rect x="1463.5" y="424.5" width="27" height="27" fill="#fff" stroke="#222" stroke-width="1"/><rect x="1463" y="424" width="28" height="4.5" fill="#000"/><rect x="1464.2" y="424.7" width="3.3" height="3.3" fill="#fff"/><rect x="1463.5" y="471.5" width="27" height="27" fill="#fff" stroke="#222" stroke-width="1"/><rect x="1463" y="471" width="28" height="4.5" fill="#000"/><rect x="1464.2" y="471.7" width="3.3" height="3.3" fill="#fff"/><path d="M1470 139 L1478 135 L1478 146 L1470 150 Z" fill="#aaa" stroke="#555" stroke-width="0.6"/><path d="M1473 138 L1483 134 L1483 145 L1473 149 Z" fill="#f8f8f8" stroke="#555" stroke-width="0.6"/><path d="M1476 145 L1480 138 L1481 143 Z" fill="none" stroke="#f03030" stroke-width="0.8"/><rect x="1470" y="183.5" width="10.5" height="8" fill="#f2ecc8" stroke="#777" stroke-width="0.8"/><circle cx="1479" cy="191.5" r="4.5" fill="#f2ecc8" fill-opacity="0.85" stroke="#777" stroke-width="0.8"/><rect x="1468.5" y="231" width="17" height="10" rx="2" fill="#f4f6fa" stroke="#b8c8e0" stroke-width="0.8"/><rect x="1466.5" y="284.5" width="4.5" height="3.5" fill="#000"/><rect x="1473.5" y="284.5" width="14" height="3.3" fill="#fff" stroke="#333" stroke-width="0.7"/><rect x="1466.5" y="290.5" width="4.5" height="3.5" fill="#000"/><rect x="1473.5" y="290.5" width="14" height="3.3" fill="#fff" stroke="#333" stroke-width="0.7"/><rect x="1466.5" y="296.5" width="4.5" height="3.5" fill="#000"/><rect x="1473.5" y="296.5" width="14" height="3.3" fill="#fff" stroke="#333" stroke-width="0.7"/><path d="M1470 333 Q1477 330 1484 333 L1478.5 340 L1478.5 346.5 L1476.5 346 L1476.5 340 Z" fill="#9a9a9a" stroke="#555" stroke-width="0.5"/><ellipse cx="1477" cy="333" rx="7" ry="1.6" fill="#666"/><path d="M1468 377 L1473 380 L1473 386 L1468 389 Z" fill="#fff" stroke="#333" stroke-width="0.7"/><rect x="1473" y="379.5" width="10" height="7" fill="#bbb"/><line x1="1467" y1="383" x2="1487" y2="383" stroke="#f06060" stroke-width="0.7" stroke-dasharray="1 1"/><g fill="#9a9a9a"><rect x="1465.5" y="432.5" width="8" height="0.9"/><rect x="1465.5" y="435.8" width="9" height="0.9"/><rect x="1465.5" y="439" width="12" height="0.9"/><rect x="1465.5" y="442.2" width="12.5" height="0.9"/></g><line x1="1463.5" y1="447" x2="1490.5" y2="447" stroke="#333" stroke-width="0.9"/><rect x="1472" y="448.6" width="15" height="1.2" fill="#777"/><rect x="1465.5" y="448.6" width="2" height="1.2" fill="#777"/><rect x="1470.3" y="479.5" width="13" height="14.6" rx="1" fill="#c08a30" stroke="#9a6a20" stroke-width="0.5"/><rect x="1471.8" y="481" width="10" height="11.6" fill="#f4f4f4"/><path d="M1473 484 h7 M1473 486 h7 M1473 488 h5" stroke="#c8c8c8" stroke-width="0.6"/><path d="M1479.5 491.6 L1481.8 489.4 L1481.8 491.6 Z" fill="#999"/><rect x="1474.3" y="478.4" width="5" height="2.4" rx="0.6" fill="#a0a098"/></svg></div>
<div id="status" class="a"><svg width="1500" height="46" viewBox="0 798 1500 46" style="position:absolute;left:0;top:0">
<rect x="0" y="798" width="1500" height="46" fill="#dbdbdb"/>
<g font-family="Liberation Sans" font-size="10.2" fill="#111">
<text x="2" y="816">83,30.6</text>
<text x="2" y="836">@-67,0.6</text>
<text x="256" y="816">88.4611&lt;20°</text>
<text x="256" y="836">@67.0027&lt;179°</text>
<text x="532" y="825.5">Sélectionne une entité ou une région</text>
<text x="949" y="825.5">Aucune des entités sélectionnées.</text>
</g>
<line x1="253.5" y1="802" x2="253.5" y2="842" stroke="#a0a0a0"/>
<circle cx="509" cy="822" r="2.8" fill="#c4c4c4"/>
<circle cx="943" cy="822" r="2.8" fill="#c4c4c4"/>
<circle cx="1272" cy="822" r="2.8" fill="#c4c4c4"/>
<rect x="717.5" y="806.5" width="17" height="27" rx="8.5" fill="#fff" stroke="#333" stroke-width="1"/>
<line x1="717.5" y1="819" x2="734.5" y2="819" stroke="#333" stroke-width="0.8"/>
<line x1="726" y1="806.5" x2="726" y2="819" stroke="#333" stroke-width="0.8"/>
<rect x="724.3" y="809" width="3.4" height="6" rx="1.7" fill="#fff" stroke="#333" stroke-width="0.8"/>
</svg></div>
</body></html>
